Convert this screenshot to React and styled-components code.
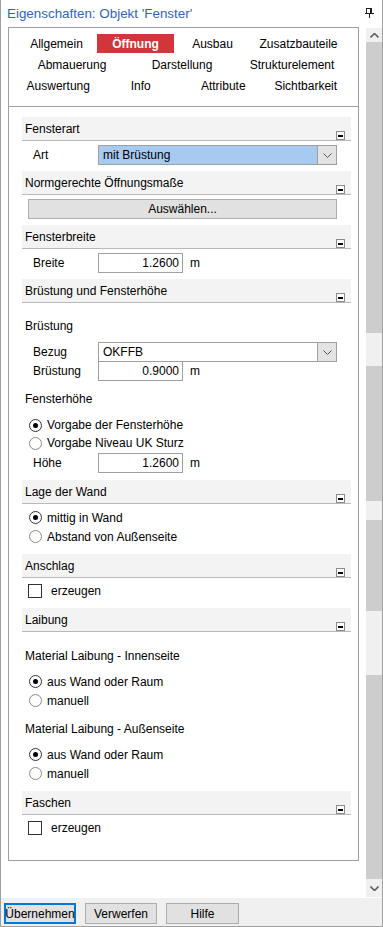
import React from 'react';
import styled, { createGlobalStyle } from 'styled-components';

const Global = createGlobalStyle`
  html, body { margin: 0; padding: 0; background: #fff; }
  body { font-family: "Liberation Sans", Arial, sans-serif; font-size: 12px; color: #000; }
  * { box-sizing: border-box; }
`;

const Window = styled.div`
  width: 383px;
  height: 927px;
  display: flex;
  flex-direction: column;
  border: 1px solid #a0a0a0;
  border-top: none;
  background: #fff;
  overflow: hidden;
`;

const TitleBar = styled.div`
  height: 27px;
  flex: none;
  display: flex;
  align-items: center;
  justify-content: space-between;
  padding: 0 8px 1px 6px;
`;

const Title = styled.div`
  font-size: 13.4px;
  color: #2f66b8;
  white-space: nowrap;
`;

const Body = styled.div`
  flex: 1;
  display: flex;
  min-height: 0;
`;

const Main = styled.div`
  flex: 1;
  padding-left: 7px;
`;

const Panel = styled.div`
  width: 351px;
  height: 834px;
  border: 1px solid #a0a0a0;
  display: flex;
  flex-direction: column;
`;

const TabArea = styled.div`
  height: 79px;
  flex: none;
  border-bottom: 1px solid #a0a0a0;
  padding: 6px 0 0 8px;
`;

const TabRow = styled.div`
  width: 330px;
  height: 21px;
  display: grid;
  grid-template-columns: ${p => p.$cols};
  align-items: start;
`;

const Tab = styled.div`
  justify-self: ${p => (p.$active ? 'stretch' : 'center')};
  margin: ${p => (p.$active ? '0 1px' : '0')};
  height: 19px;
  display: flex;
  align-items: center;
  justify-content: center;
  white-space: nowrap;
  background: ${p => (p.$active ? '#d1373a' : 'transparent')};
  color: ${p => (p.$active ? '#fff' : '#000')};
  font-weight: ${p => (p.$active ? 'bold' : 'normal')};
`;

const Content = styled.div`
  padding: 10px 7px 0 13px;
`;

const SectionHeader = styled.div`
  height: 24px;
  background: #f3f3f3;
  border-bottom: 1px solid #b9b9b9;
  display: flex;
  align-items: center;
  padding: 0 6px 0 3px;
`;

const HeaderText = styled.span`
  flex: 1;
`;

const Collapse = styled.span`
  align-self: flex-end;
  width: 9px;
  height: 9px;
  border: 1px solid #8a8a8a;
  background: #fff;
  display: flex;
  align-items: center;
  justify-content: center;
  &::after {
    content: '';
    width: 5px;
    height: 2px;
    background: #000;
  }
`;

const SectionBody = styled.div`
  padding: ${p => p.$top ?? 4}px 0 ${p => p.$bottom ?? 6}px 0;
`;

const FieldRow = styled.div`
  height: 20px;
  display: flex;
  align-items: center;
  padding-left: 11px;
  margin-top: ${p => p.$mt ?? 0}px;
`;

const Label = styled.span`
  width: 65px;
  flex: none;
`;

const Select = styled.div`
  width: 239px;
  height: 20px;
  border: 1px solid #a0a0a0;
  background: ${p => (p.$highlight ? '#a6caf0' : '#fff')};
  display: flex;
  align-items: center;
`;

const SelectText = styled.span`
  flex: 1;
  padding-left: 4px;
`;

const DropButton = styled.span`
  width: 19px;
  height: 100%;
  border-left: 1px solid #a0a0a0;
  background: #e3e3e3;
  display: flex;
  align-items: center;
  justify-content: center;
`;

const NumInput = styled.div`
  width: 85px;
  height: 20px;
  border: 1px solid #a0a0a0;
  background: #fff;
  display: flex;
  align-items: center;
  justify-content: flex-end;
  padding-right: 3px;
`;

const Unit = styled.span`
  margin-left: 7px;
`;

const WideButton = styled.div`
  margin-left: 6px;
  width: 309px;
  height: 20px;
  background: #e1e1e1;
  border: 1px solid #adadad;
  display: flex;
  align-items: center;
  justify-content: center;
`;

const SubTitle = styled.div`
  padding: ${p => p.$top}px 0 ${p => p.$bottom}px 3px;
  line-height: 14px;
`;

const OptionRow = styled.div`
  height: ${p => p.$h ?? 18}px;
  display: flex;
  align-items: center;
  padding-left: ${p => p.$pl ?? 7}px;
`;

const Radio = styled.span`
  width: 13px;
  height: 13px;
  border-radius: 50%;
  border: 1px solid ${p => (p.$checked ? '#333' : '#8a8a8a')};
  background: #fff;
  margin-right: 5px;
  display: flex;
  align-items: center;
  justify-content: center;
  &::after {
    content: '';
    width: 5px;
    height: 5px;
    border-radius: 50%;
    background: ${p => (p.$checked ? '#000' : 'transparent')};
  }
`;

const Check = styled.span`
  width: 14px;
  height: 14px;
  border: 1px solid #333;
  background: #fff;
  margin-right: 9px;
`;

const ScrollBar = styled.div`
  width: 16px;
  flex: none;
  margin-top: 1px;
  height: 869px;
  display: flex;
  flex-direction: column;
`;

const ScrollPart = styled.div`
  height: ${p => p.$h}px;
  flex: none;
  background: ${p => (p.$thumb ? '#cdcdcd' : '#f0f0f0')};
  display: flex;
  align-items: center;
  justify-content: center;
`;

const ButtonBar = styled.div`
  height: 28px;
  flex: none;
  background: #f0f0f0;
  display: flex;
  align-items: flex-start;
  gap: 9px;
  padding: 5px 0 0 3px;
`;

const Button = styled.div`
  width: ${p => p.$w}px;
  height: 21px;
  background: #e1e1e1;
  border: ${p => (p.$primary ? '2px solid #0078d7' : '1px solid #adadad')};
  display: flex;
  align-items: center;
  justify-content: center;
`;

const Chevron = ({ up, color = '#555', w = 9, h = 5, sw = 1 }) => (
  <svg width={w} height={h} viewBox="0 0 9 5" style={{ display: 'block' }}>
    <polyline
      points={up ? '0.5,4.5 4.5,0.5 8.5,4.5' : '0.5,0.5 4.5,4.5 8.5,0.5'}
      fill="none"
      stroke={color}
      strokeWidth={sw}
    />
  </svg>
);

const Pin = () => (
  <svg width="9" height="10" viewBox="0 0 9 10" style={{ display: 'block' }}>
    <rect x="1.5" y="0.5" width="5" height="5" fill="none" stroke="#222" />
    <rect x="5" y="0" width="2" height="6" fill="#222" />
    <rect x="0" y="5" width="9" height="1" fill="#222" />
    <rect x="4" y="6" width="1" height="4" fill="#222" />
  </svg>
);

const Section = ({ title, children, top, bottom }) => (
  <div>
    <SectionHeader>
      <HeaderText>{title}</HeaderText>
      <Collapse />
    </SectionHeader>
    <SectionBody $top={top} $bottom={bottom}>
      {children}
    </SectionBody>
  </div>
);

const Dropdown = ({ value, highlight }) => (
  <Select $highlight={highlight}>
    <SelectText>{value}</SelectText>
    <DropButton>
      <Chevron />
    </DropButton>
  </Select>
);

const RadioOption = ({ checked, label, h }) => (
  <OptionRow $h={h}>
    <Radio $checked={checked} />
    <span>{label}</span>
  </OptionRow>
);

const CheckOption = ({ label }) => (
  <OptionRow $pl={6}>
    <Check />
    <span>{label}</span>
  </OptionRow>
);

const tabRows = [
  { cols: '79px 79px 75px 97px', items: ['Allgemein', 'Öffnung', 'Ausbau', 'Zusatzbauteile'] },
  { cols: 'repeat(3, 1fr)', items: ['Abmauerung', 'Darstellung', 'Strukturelement'] },
  { cols: 'repeat(4, 1fr)', items: ['Auswertung', 'Info', 'Attribute', 'Sichtbarkeit'] },
];

const scrollParts = [
  { h: 14, arrow: 'up' },
  { h: 291, thumb: true },
  { h: 33 },
  { h: 135, thumb: true },
  { h: 19 },
  { h: 91, thumb: true },
  { h: 64 },
  { h: 204, thumb: true },
  { h: 18, arrow: 'down' },
];

export default function App() {
  return (
    <>
      <Global />
      <Window>
        <TitleBar>
          <Title>Eigenschaften: Objekt 'Fenster'</Title>
          <Pin />
        </TitleBar>
        <Body>
          <Main>
            <Panel>
              <TabArea>
                {tabRows.map((row, i) => (
                  <TabRow key={i} $cols={row.cols}>
                    {row.items.map(t => (
                      <Tab key={t} $active={t === 'Öffnung'}>
                        {t}
                      </Tab>
                    ))}
                  </TabRow>
                ))}
              </TabArea>
              <Content>
                <Section title="Fensterart">
                  <FieldRow>
                    <Label>Art</Label>
                    <Dropdown value="mit Brüstung" highlight />
                  </FieldRow>
                </Section>
                <Section title="Normgerechte Öffnungsmaße">
                  <WideButton>Auswählen...</WideButton>
                </Section>
                <Section title="Fensterbreite">
                  <FieldRow>
                    <Label>Breite</Label>
                    <NumInput>1.2600</NumInput>
                    <Unit>m</Unit>
                  </FieldRow>
                </Section>
                <Section title="Brüstung und Fensterhöhe" bottom={7}>
                  <SubTitle $top={12} $bottom={9}>Brüstung</SubTitle>
                  <FieldRow>
                    <Label>Bezug</Label>
                    <Dropdown value="OKFFB" />
                  </FieldRow>
                  <FieldRow $mt={-1}>
                    <Label>Brüstung</Label>
                    <NumInput>0.9000</NumInput>
                    <Unit>m</Unit>
                  </FieldRow>
                  <SubTitle $top={11} $bottom={10}>Fensterhöhe</SubTitle>
                  <RadioOption checked label="Vorgabe der Fensterhöhe" />
                  <RadioOption label="Vorgabe Niveau UK Sturz" />
                  <FieldRow $mt={1}>
                    <Label>Höhe</Label>
                    <NumInput>1.2600</NumInput>
                    <Unit>m</Unit>
                  </FieldRow>
                </Section>
                <Section title="Lage der Wand" bottom={8}>
                  <RadioOption checked h={19} label="mittig in Wand" />
                  <RadioOption h={19} label="Abstand von Außenseite" />
                </Section>
                <Section title="Anschlag" bottom={8}>
                  <CheckOption label="erzeugen" />
                </Section>
                <Section title="Laibung" bottom={8}>
                  <SubTitle $top={13} $bottom={9}>Material Laibung - Innenseite</SubTitle>
                  <RadioOption checked h={19} label="aus Wand oder Raum" />
                  <RadioOption h={19} label="manuell" />
                  <SubTitle $top={12} $bottom={9}>Material Laibung - Außenseite</SubTitle>
                  <RadioOption checked h={19} label="aus Wand oder Raum" />
                  <RadioOption h={19} label="manuell" />
                </Section>
                <Section title="Faschen">
                  <CheckOption label="erzeugen" />
                </Section>
              </Content>
            </Panel>
          </Main>
          <ScrollBar>
            {scrollParts.map((p, i) => (
              <ScrollPart key={i} $h={p.h} $thumb={p.thumb}>
                {p.arrow && (
                  <Chevron up={p.arrow === 'up'} color="#606060" w={9} h={5} sw={1.6} />
                )}
              </ScrollPart>
            ))}
          </ScrollBar>
        </Body>
        <ButtonBar>
          <Button $primary $w={72}>Übernehmen</Button>
          <Button $w={72}>Verwerfen</Button>
          <Button $w={73}>Hilfe</Button>
        </ButtonBar>
      </Window>
    </>
  );
}
